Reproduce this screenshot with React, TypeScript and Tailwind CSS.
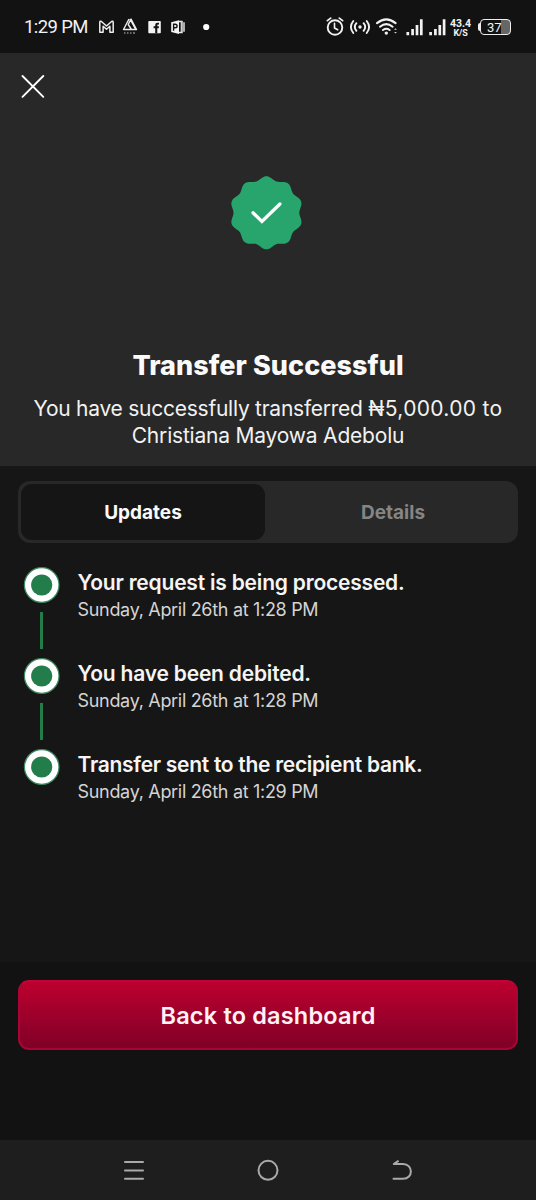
import React from "react";

const steps = [
  { title: "Your request is being processed.", time: "Sunday, April 26th at 1:28 PM", spacing: "tracking-[-0.2px]" },
  { title: "You have been debited.", time: "Sunday, April 26th at 1:28 PM", spacing: "tracking-[-0.2px]" },
  { title: "Transfer sent to the recipient bank.", time: "Sunday, April 26th at 1:29 PM", spacing: "tracking-[-0.29px]" },
];

const badgePoints = Array.from({ length: 240 }, (_, i) => {
  const angle = (i / 240) * Math.PI * 2;
  const r = 34.7 + 1.8 * Math.cos(10 * angle);
  return `${(37.4 + r * Math.sin(angle)).toFixed(2)},${(36.8 - r * Math.cos(angle)).toFixed(2)}`;
}).join(" ");

function StatusBar() {
  return (
    <div className="flex h-[53px] shrink-0 items-center bg-[#121212] pl-6 text-[#f2f2f2]">
      <span className="w-[74px] whitespace-nowrap font-[Roboto] text-[18.5px] leading-6 tracking-[-0.6px]">1:29 PM</span>
      <svg width="120" height="24" viewBox="0 0 120 24" fill="none" className="shrink-0">
        <path d="M1.8 17.3V7.4Q1.8 5.6 3.4 6.5L8.5 11L13.6 6.5Q15.2 5.6 15.2 7.4V17.3H11.9V11.3L8.5 14.3L5.1 11.3V17.3Z" stroke="#eee" strokeWidth="1.5" strokeLinejoin="round" />
        <path d="M31 4L25.5 14.5H38.5L33 4L30.2 9.5L33.5 14.5M32 4L37.5 14" stroke="#eee" strokeWidth="1.4" strokeLinejoin="round" />
        <path d="M26 18h1.5M29 18h1.5M32 18h1.5M35 18h2" stroke="#888" strokeWidth="1.5" />
        <rect x="50.3" y="6" width="12.5" height="12.3" rx="0.8" fill="#f4f4f4" />
        <path d="M57.2 18.3V13.2H55.6V11.2H57.2V9.9Q57.2 7.7 59.5 7.7H61V9.6H60Q59.3 9.6 59.3 10.3V11.2H61L60.7 13.2H59.3V18.3Z" fill="#151515" />
        <path d="M73.2 7.2L81 5.2V19L73.2 17Z" fill="#f4f4f4" />
        <path d="M75.6 15.7V9.2H77.2Q79.1 9.2 79.1 11T77.2 12.8H75.6" stroke="#151515" strokeWidth="1.4" />
        <path d="M81 6.5H84V17.5H81M86 7.3V16.7" stroke="#eee" strokeWidth="1.4" />
        <path d="M83.2 6.5V17.5" stroke="#ddd" strokeWidth="1" />
        <circle cx="108.2" cy="12" r="3.1" fill="#fff" />
      </svg>
      <svg width="124" height="32" viewBox="0 0 124 32" fill="none" className="ml-[106px] shrink-0" stroke="#f2f2f2" strokeLinecap="round">
        <circle cx="11" cy="16.5" r="7.3" strokeWidth="1.9" />
        <path d="M10.5 12.3V17L13.7 18.8" strokeWidth="1.6" />
        <path d="M3.4 9.6L6.7 7.1M18.6 9.6L15.3 7.1" strokeWidth="1.8" />
        <circle cx="36" cy="16" r="1.7" fill="#f2f2f2" stroke="none" />
        <path d="M32.4 12.2Q29.2 16 32.4 19.8M39.6 12.2Q42.8 16 39.6 19.8M29.3 10Q24.5 16 29.3 22M42.7 10Q47.5 16 42.7 22" strokeWidth="1.9" />
        <path d="M53 12.1Q62.3 4.5 71.6 12.1M56 15.7Q62.3 10.6 68.6 15.7M59 19Q62.3 16.5 65.6 19" strokeWidth="2.1" />
        <circle cx="62.3" cy="22.1" r="1.7" fill="#f2f2f2" stroke="none" />
        <path d="M70.1 18.7L71.5 17.2L72.9 18.7ZM70.1 20.9L71.5 22.4L72.9 20.9Z" fill="#ddd" stroke="none" />
        <path d="M83.8 21V24.2M88.6 18V24.2M93 14V24.2M97.3 8.3V24.2M106.6 21V24.2M111.4 18V24.2M115.8 14V24.2M120.1 8.3V24.2" strokeWidth="2.7" strokeLinecap="butt" />
      </svg>
      <div className="ml-[2px] flex w-[21px] flex-col items-center gap-px whitespace-nowrap pt-[2px] font-[Roboto] font-bold text-[#f2f2f2]">
        <span className="text-[10.5px] leading-[9px]">43.4</span>
        <span className="text-[9px] leading-[8px] tracking-[-0.2px]">K/S</span>
      </div>
      <div className="ml-[7px] flex items-center">
        <div className="h-2 w-[2px] rounded-l bg-[#eee]" />
        <div className="flex h-4 w-[31px] items-center rounded-[4px] border-[1.5px] border-[#eee] bg-linear-to-r from-[#121212] from-70% to-[#666] to-70% pl-[6px] pt-px font-[Roboto] text-[13px] leading-none">37</div>
      </div>
    </div>
  );
}

function Hero() {
  return (
    <section className="flex h-[413px] shrink-0 flex-col items-center bg-[#282828] text-center">
      <div className="flex h-[123px] w-full pl-5 pt-5">
        <svg width="26" height="26" viewBox="0 0 26 26" stroke="#fff" strokeWidth="1.9" strokeLinecap="round">
          <path d="M2.5 3L23.3 23.8M23.3 3L2.5 23.8" />
        </svg>
      </div>
      <svg width="74" height="74" viewBox="0 0 74 74" className="mr-[4px] shrink-0" fill="none">
        <polygon points={badgePoints} fill="#27a56d" />
        <path d="M24 36.8L32.9 45.5L50.9 28" stroke="#fff" strokeWidth="3.3" strokeLinecap="round" />
      </svg>
      <h1 className="mt-[100px] whitespace-nowrap text-[27px] font-extrabold leading-8 tracking-[0.05px] text-[#fafafa]">Transfer Successful</h1>
      <p className="mt-[13px] whitespace-nowrap text-[21px] leading-[27px] text-[#f2f2f2]">
        <span className="block tracking-[-0.25px]">You have successfully transferred <span className="tracking-[0.32px]">₦5,000.00 to</span></span>
        <span className="block tracking-[-0.2px]">Christiana Mayowa Adebolu</span>
      </p>
    </section>
  );
}

export default function App() {
  return (
    <main className="flex h-[1200px] w-[536px] flex-col overflow-hidden bg-[#161616] font-[Inter,sans-serif]">
      <StatusBar />
      <Hero />
      <section className="h-[496px] shrink-0 px-[18px] pt-[15px]">
        <div className="flex h-[62px] rounded-[12px] bg-[#282828] p-[3px] text-[19px] font-bold">
          <button className="h-[56px] w-[244px] rounded-[11px] bg-[#151515] pt-[2px] text-[#fafafa]">Updates</button>
          <button className="flex-1 pl-[6px] pt-[2px] text-[#858585]">Details</button>
        </div>
        <ol className="mt-6 pl-[6px]">
          {steps.map((step, i) => (
            <li key={step.title} className="flex h-[91px]">
              <div className="flex w-[35px] flex-col items-center">
                <svg width="35" height="36" viewBox="0 0 35 36" className="shrink-0 overflow-visible">
                  <circle cx="17.7" cy="18" r="17.3" fill="#fff" stroke="#3d8a60" strokeWidth="1.2" />
                  <circle cx="17.7" cy="18" r="10.6" fill="#237d4b" />
                </svg>
                {i < steps.length - 1 && <div className="mt-[9px] h-[37px] w-[3px] bg-[#237d4b]" />}
              </div>
              <div className="ml-[18.5px] whitespace-nowrap pt-[2px]">
                <h2 className={"text-[21px] font-semibold leading-7 text-[#f5f5f5] " + step.spacing}>{step.title}</h2>
                <p className="-mt-px text-[18px] leading-7 tracking-[-0.31px] text-[#d4d4d4]">{step.time}</p>
              </div>
            </li>
          ))}
        </ol>
      </section>
      <footer className="h-[178px] shrink-0 bg-[#121212] px-[18px] pt-[18px]">
        <button className="h-[70px] w-full rounded-[11px] border-2 border-[#a80536] border-t-[#c10435] bg-linear-to-b from-[#bd002f] to-[#800027] pt-[2px] text-[23.5px] font-semibold tracking-[0.18px] text-[#fff2f5]">Back to dashboard</button>
      </footer>
      <nav className="flex h-[60px] shrink-0 items-center bg-[#1e1e1e] pl-[123px]">
        <svg width="300" height="28" viewBox="0 0 300 28" fill="none" stroke="#aaa" strokeWidth="2" strokeLinecap="round">
          <path d="M2 6H20M2 14.4H20M2 22.8H20" />
          <circle cx="145" cy="14.3" r="9.5" />
          <path d="M270.5 22.8H280C290.5 22.8 290.5 8 280 8H270.8L275 5.2" strokeLinejoin="round" />
        </svg>
      </nav>
    </main>
  );
}
